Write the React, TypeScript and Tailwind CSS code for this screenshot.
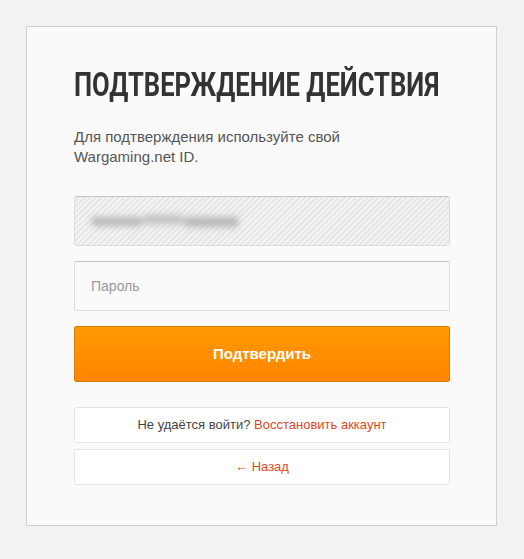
import React from 'react';

export default function App() {
  return (
    <div className="min-h-[559px] bg-[#f2f2f2] p-[26px] font-['Liberation_Sans',Arial,sans-serif]">
      <div className="w-[471px] h-[500px] border border-[#cfcfcf] bg-[#fafafa] pl-[47px] pr-[46px] pt-[38px]">
        <h1 className="whitespace-nowrap origin-left scale-x-[0.775] font-['Roboto',sans-serif] text-[33px] leading-[40px] font-bold text-[#333] uppercase">
          Подтверждение действия
        </h1>
        <p className="mt-[22px] text-[15px] leading-[20px] text-[#555]">
          Для подтверждения используйте свой
          <br />
          Wargaming.net ID.
        </p>

        <div className="mt-[29px] h-[50px] rounded-[2px] border border-[#dcdcdc] border-t-[#c4c4c4] bg-[repeating-linear-gradient(135deg,#f3f3f3_0px,#f3f3f3_2px,#e6e6e6_2px,#e6e6e6_4px)] flex items-center pl-[16px]">
          <div className="flex items-center blur-[3px]">
            <div className="h-[9px] w-[52px] rounded-full bg-[#b8b8b8]" />
            <div className="h-[9px] w-[40px] -mt-[3px] rounded-full bg-[#c0c0c0]" />
            <div className="h-[10px] w-[56px] mt-[2px] rounded-full bg-[#b8b8b8]" />
          </div>
        </div>

        <div className="mt-[15px] h-[50px] rounded-[2px] border border-[#dcdcdc] border-t-[#c4c4c4] bg-[#fafafa] flex items-center pl-[16px]">
          <span className="text-[14px] text-[#999]">Пароль</span>
        </div>

        <button className="mt-[15px] w-full h-[56px] rounded-[2px] border border-[#e07a00] bg-gradient-to-b from-[#ff9a00] to-[#ff8500] text-white text-[15px] font-bold flex items-center justify-center">
          Подтвердить
        </button>

        <div className="mt-[25px] h-[36px] rounded-[2px] border border-[#e6e6e6] bg-white flex items-center justify-center text-[13px] text-[#444]">
          Не удаётся войти?&nbsp;<span className="text-[#e5461e]">Восстановить аккаунт</span>
        </div>

        <div className="mt-[6px] h-[36px] rounded-[2px] border border-[#e6e6e6] bg-white flex items-center justify-center text-[13px] text-[#e5461e]">
          ← Назад
        </div>
      </div>
    </div>
  );
}
